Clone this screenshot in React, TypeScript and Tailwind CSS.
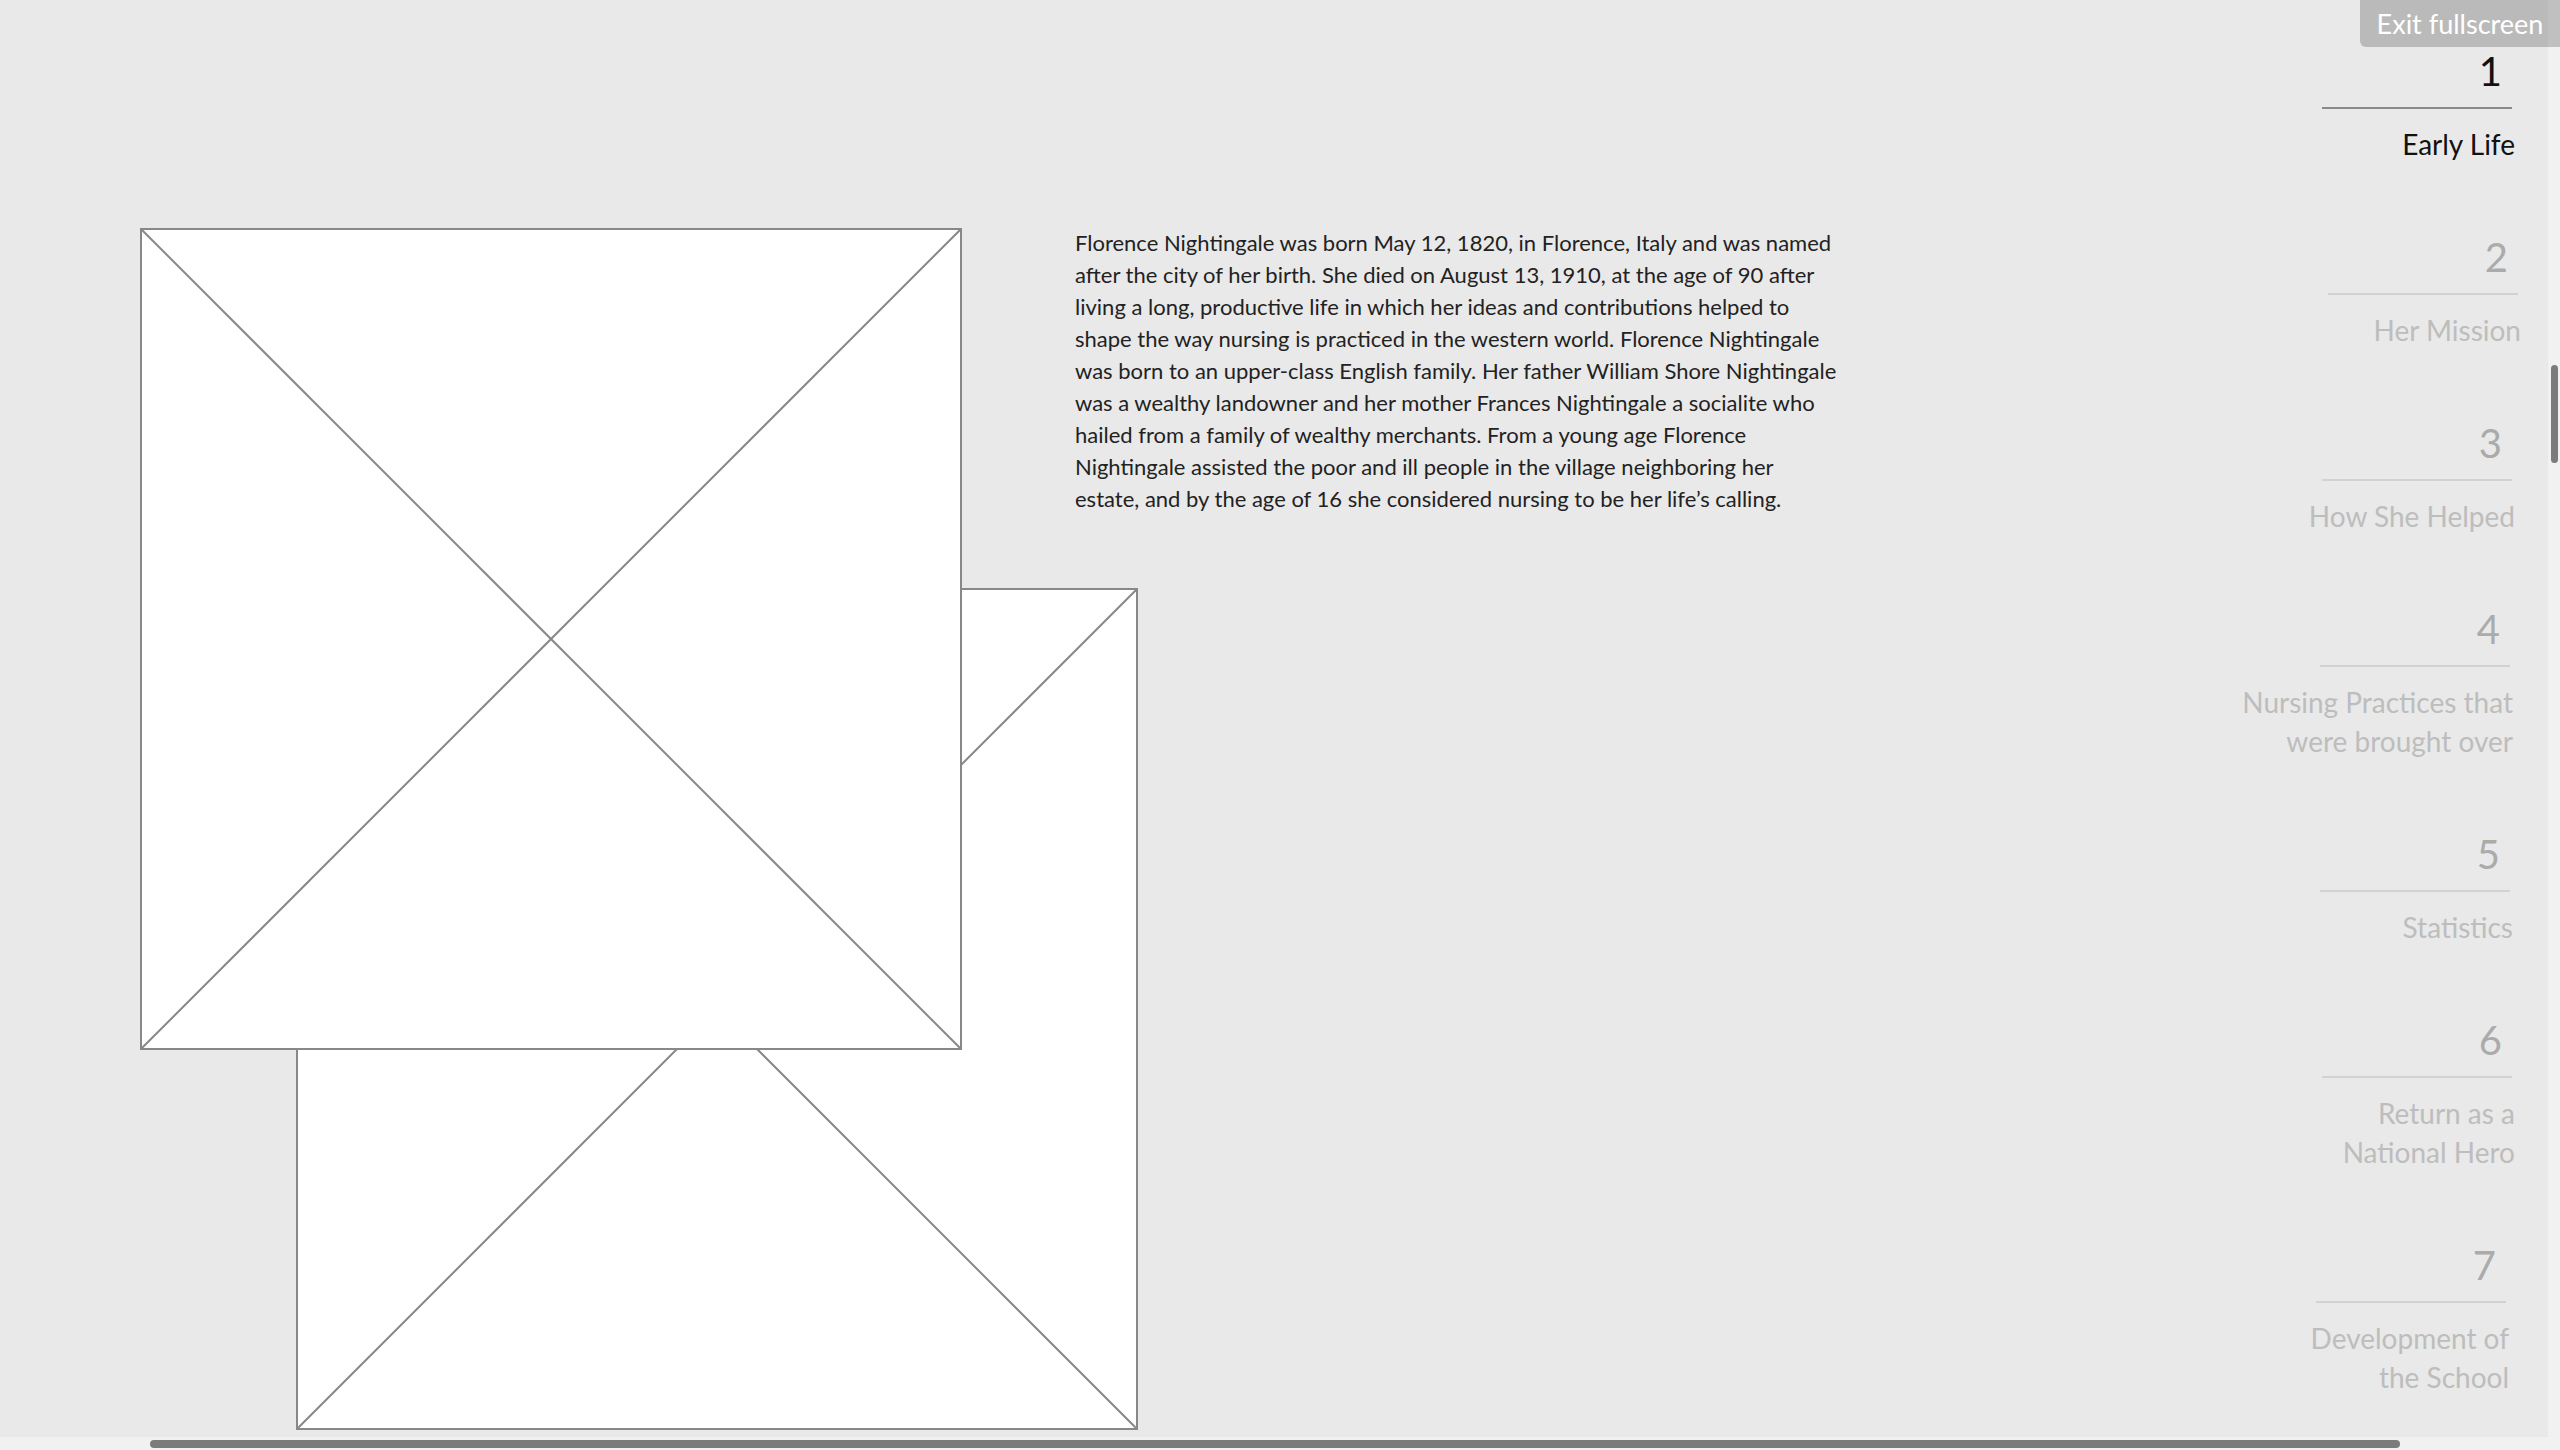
const paragraph = [
  'Florence Nightingale was born May 12, 1820, in Florence, Italy and was named',
  'after the city of her birth. She died on August 13, 1910, at the age of 90 after',
  'living a long, productive life in which her ideas and contributions helped to',
  'shape the way nursing is practiced in the western world. Florence Nightingale',
  'was born to an upper-class English family. Her father William Shore Nightingale',
  'was a wealthy landowner and her mother Frances Nightingale a socialite who',
  'hailed from a family of wealthy merchants. From a young age Florence',
  'Nightingale assisted the poor and ill people in the village neighboring her',
  'estate, and by the age of 16 she considered nursing to be her life’s calling.',
]

// hand-placed wireframe items drift a few px, so each keeps its own right margin
const sections = [
  { n: '1', label: ['Early Life'], active: true, mr: 'mr-[36px]' },
  { n: '2', label: ['Her Mission'], active: false, mr: 'mr-[30px]' },
  { n: '3', label: ['How She Helped'], active: false, mr: 'mr-[36px]' },
  { n: '4', label: ['Nursing Practices that', 'were brought over'], active: false, mr: 'mr-[38px]' },
  { n: '5', label: ['Statistics'], active: false, mr: 'mr-[38px]' },
  { n: '6', label: ['Return as a', 'National Hero'], active: false, mr: 'mr-[36px]' },
  { n: '7', label: ['Development of', 'the School'], active: false, mr: 'mr-[42px]' },
]

function Placeholder({ className }: { className: string }) {
  return (
    <div className={`relative border-2 border-[#888888] bg-white ${className}`}>
      <svg className="absolute inset-0 h-full w-full" viewBox="0 0 100 100" preserveAspectRatio="none">
        <line x1="0" y1="0" x2="100" y2="100" stroke="#888888" strokeWidth="2" vectorEffect="non-scaling-stroke" />
        <line x1="100" y1="0" x2="0" y2="100" stroke="#888888" strokeWidth="2" vectorEffect="non-scaling-stroke" />
      </svg>
    </div>
  )
}

function SectionNav() {
  return (
    <nav className="flex flex-col items-end gap-[73px] pt-[51px]">
      {sections.map((s) => (
        <div key={s.n} className={`flex w-[190px] flex-col items-end ${s.mr}`}>
          <div className={`mr-[10px] text-[40px] leading-[40px] ${s.active ? 'text-[#111111]' : 'text-[#ababab]'}`}>
            {s.n}
          </div>
          <div className={`mt-[16px] h-[2px] w-[190px] ${s.active ? 'bg-[#8a8a8a]' : 'bg-[#d2d2d2]'}`} />
          <div
            className={`-mr-[3px] mt-[16px] whitespace-nowrap text-right text-[28px] leading-[39px] ${
              s.active ? 'text-[#111111]' : 'text-[#bdbdbd]'
            }`}
          >
            {s.label.map((line) => (
              <div key={line}>{line}</div>
            ))}
          </div>
        </div>
      ))}
    </nav>
  )
}

export default function App() {
  return (
    <div className="relative flex h-[1450px] w-[2560px] flex-col overflow-hidden bg-[#e9e9e9] font-[Lato,sans-serif]">
      <div className="flex min-h-0 flex-1">
        <main className="flex flex-1">
          <div className="flex w-[1075px] shrink-0 flex-col">
            <Placeholder className="relative z-10 ml-[140px] mt-[228px] h-[822px] w-[822px]" />
            <Placeholder className="ml-[296px] -mt-[462px] h-[842px] w-[842px]" />
          </div>

          <div className="pt-[227px] text-[22px] leading-[32px] text-[#222222]">
            {paragraph.map((line) => (
              <p key={line} className="whitespace-nowrap">
                {line}
              </p>
            ))}
          </div>

          <div className="flex-1" />
          <SectionNav />
        </main>

        {/* vertical scrollbar */}
        <div className="w-[12px] shrink-0 bg-[#f1f1f1] pt-[365px]">
          <div className="ml-[3px] h-[98px] w-[7px] rounded-full bg-[#7b7b7b]" />
        </div>
      </div>

      {/* horizontal scrollbar */}
      <div className="h-[13px] shrink-0 bg-[#f1f1f1] pl-[150px] pt-[3px]">
        <div className="h-[8px] w-[2250px] rounded-full bg-[#7b7b7b]" />
      </div>

      <button className="absolute right-0 top-0 h-[47px] w-[200px] rounded-bl-[6px] bg-black/20 text-[27px] leading-[47px] text-white">
        Exit fullscreen
      </button>
    </div>
  )
}
